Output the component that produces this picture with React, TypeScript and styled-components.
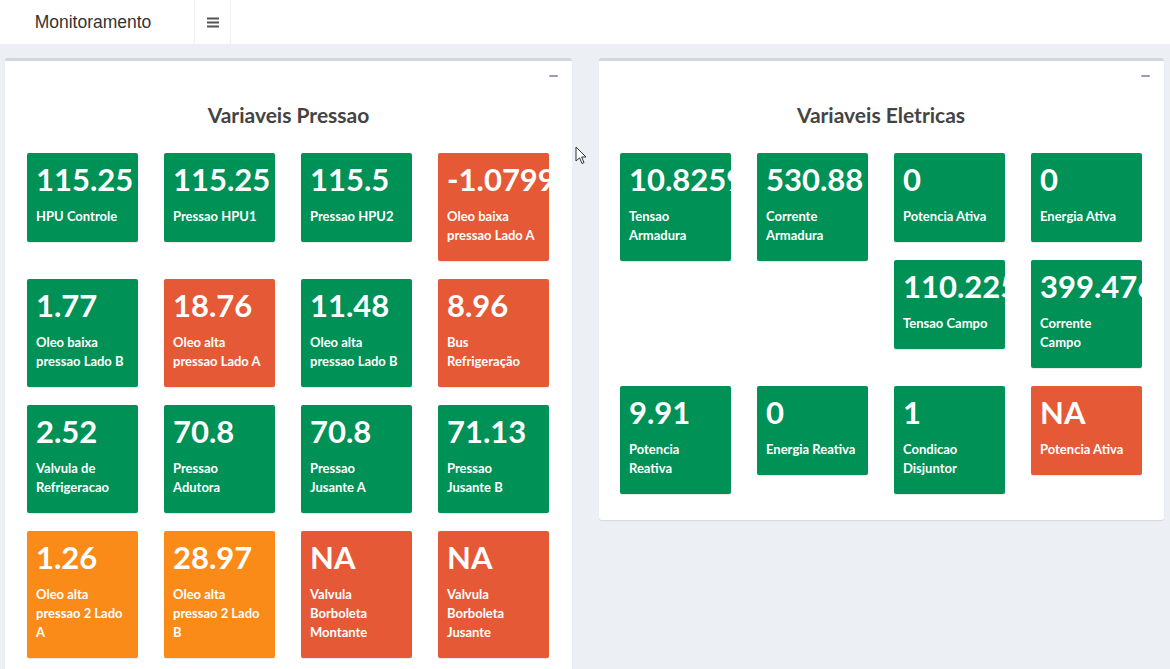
import React from 'react';
import styled, { createGlobalStyle } from 'styled-components';

type Tone = 'green' | 'red' | 'orange';

interface TileData {
  value: string;
  label: string;
  tone: Tone;
}

const toneColors: Record<Tone, string> = {
  green: '#009157',
  red: '#e55937',
  orange: '#fb8b19',
};

const GlobalStyle = createGlobalStyle`
  html, body {
    margin: 0;
    padding: 0;
    background: #ecf0f5;
    font-family: 'Liberation Sans', Arial, sans-serif;
  }
  * { box-sizing: border-box; }
`;

const Page = styled.div`
  position: relative;
  min-height: 669px;
  background: #ecf0f5;
`;

const Header = styled.header`
  display: flex;
  height: 44px;
  background: #ffffff;
`;

const Logo = styled.div`
  width: 194px;
  display: flex;
  align-items: center;
  justify-content: center;
  padding-right: 8px;
  font-size: 17.5px;
  color: #333333;
`;

const Toggle = styled.button`
  width: 37px;
  height: 44px;
  border: none;
  border-left: 1px solid #f0f0f0;
  border-right: 1px solid #f0f0f0;
  background: #ffffff;
  display: flex;
  align-items: center;
  justify-content: center;
  padding: 0;
  margin: 0;
`;

const Content = styled.main`
  display: grid;
  grid-template-columns: 567px 565px;
  column-gap: 27px;
  align-items: start;
  padding: 14px 6px 0 5px;
`;

const Box = styled.section<{ $inset: number }>`
  background: #ffffff;
  border-top: 3px solid #d2d6de;
  border-radius: 3px;
  box-shadow: 0 1px 1px rgba(0, 0, 0, 0.1);
  padding: 0 22px 26px ${props => props.$inset}px;
`;

const BoxTools = styled.div`
  display: flex;
  justify-content: flex-end;
  align-items: center;
  height: 30px;
  margin-right: -8px;
`;

const Minimize = styled.span`
  display: block;
  width: 9px;
  height: 2px;
  border-radius: 1px;
  background: #97a0b3;
`;

const BoxTitle = styled.h2`
  margin: 12px 0 26px;
  text-align: center;
  font-family: Lato, 'Open Sans', sans-serif;
  font-weight: 700;
  font-size: 21px;
  line-height: 24px;
  color: #444444;
`;

const TileGrid = styled.div`
  display: flex;
  flex-direction: column;
  gap: 18px;
`;

const TileRow = styled.div`
  display: flex;
  align-items: flex-start;
  gap: 26px;
`;

const TileStack = styled.div`
  display: flex;
  flex-direction: column;
  gap: 18px;
  width: 111px;
`;

const Tile = styled.div<{ $tone: Tone }>`
  width: 111px;
  flex-shrink: 0;
  overflow: hidden;
  padding: 10px 0 16px 9px;
  border-radius: 2px;
  background: ${props => toneColors[props.$tone]};
  box-shadow: 0 1px 1px rgba(0, 0, 0, 0.1);
  color: #ffffff;
  font-family: Lato, 'Open Sans', sans-serif;
  font-weight: 700;
`;

const Value = styled.div`
  font-size: 31px;
  line-height: 32px;
  white-space: nowrap;
  margin-bottom: 12px;
`;

const Label = styled.div`
  font-size: 13px;
  line-height: 19px;
  white-space: pre;
`;

const Cursor = styled.svg`
  position: absolute;
  left: 575px;
  top: 146px;
`;

const pressao: TileData[][] = [
  [
    { value: '115.25', label: 'HPU Controle', tone: 'green' },
    { value: '115.25', label: 'Pressao HPU1', tone: 'green' },
    { value: '115.5', label: 'Pressao HPU2', tone: 'green' },
    { value: '-1.0799', label: 'Oleo baixa\npressao Lado A', tone: 'red' },
  ],
  [
    { value: '1.77', label: 'Oleo baixa\npressao Lado B', tone: 'green' },
    { value: '18.76', label: 'Oleo alta\npressao Lado A', tone: 'red' },
    { value: '11.48', label: 'Oleo alta\npressao Lado B', tone: 'green' },
    { value: '8.96', label: 'Bus\nRefrigeração', tone: 'red' },
  ],
  [
    { value: '2.52', label: 'Valvula de\nRefrigeracao', tone: 'green' },
    { value: '70.8', label: 'Pressao\nAdutora', tone: 'green' },
    { value: '70.8', label: 'Pressao\nJusante A', tone: 'green' },
    { value: '71.13', label: 'Pressao\nJusante B', tone: 'green' },
  ],
  [
    { value: '1.26', label: 'Oleo alta\npressao 2 Lado\nA', tone: 'orange' },
    { value: '28.97', label: 'Oleo alta\npressao 2 Lado\nB', tone: 'orange' },
    { value: 'NA', label: 'Valvula\nBorboleta\nMontante', tone: 'red' },
    { value: 'NA', label: 'Valvula\nBorboleta\nJusante', tone: 'red' },
  ],
];

// upper part of the electric box: tiles stacked per column
const eletricasColumns: TileData[][] = [
  [{ value: '10.8259', label: 'Tensao\nArmadura', tone: 'green' }],
  [{ value: '530.88', label: 'Corrente\nArmadura', tone: 'green' }],
  [
    { value: '0', label: 'Potencia Ativa', tone: 'green' },
    { value: '110.225', label: 'Tensao Campo', tone: 'green' },
  ],
  [
    { value: '0', label: 'Energia Ativa', tone: 'green' },
    { value: '399.476', label: 'Corrente\nCampo', tone: 'green' },
  ],
];

const eletricasRow: TileData[] = [
  { value: '9.91', label: 'Potencia\nReativa', tone: 'green' },
  { value: '0', label: 'Energia Reativa', tone: 'green' },
  { value: '1', label: 'Condicao\nDisjuntor', tone: 'green' },
  { value: 'NA', label: 'Potencia Ativa', tone: 'red' },
];

const ValueTile: React.FC<{ data: TileData }> = ({ data }) => (
  <Tile $tone={data.tone}>
    <Value>{data.value}</Value>
    <Label>{data.label}</Label>
  </Tile>
);

const MenuIcon = () => (
  <svg width="12" height="11" viewBox="0 0 12 11">
    <rect x="0" y="0.5" width="12" height="2" fill="#555" />
    <rect x="0" y="4.5" width="12" height="2" fill="#555" />
    <rect x="0" y="8.5" width="12" height="2" fill="#555" />
  </svg>
);

const App: React.FC = () => {
  return (
    <Page>
      <GlobalStyle />
      <Header>
        <Logo>Monitoramento</Logo>
        <Toggle aria-label="menu">
          <MenuIcon />
        </Toggle>
      </Header>
      <Content>
        <Box $inset={22}>
          <BoxTools>
            <Minimize />
          </BoxTools>
          <BoxTitle>Variaveis Pressao</BoxTitle>
          <TileGrid>
            {pressao.map((row, i) => (
              <TileRow key={i}>
                {row.map((t, j) => (
                  <ValueTile key={j} data={t} />
                ))}
              </TileRow>
            ))}
          </TileGrid>
        </Box>
        <Box $inset={21}>
          <BoxTools>
            <Minimize />
          </BoxTools>
          <BoxTitle>Variaveis Eletricas</BoxTitle>
          <TileGrid>
            <TileRow>
              {eletricasColumns.map((col, i) => (
                <TileStack key={i}>
                  {col.map((t, j) => (
                    <ValueTile key={j} data={t} />
                  ))}
                </TileStack>
              ))}
            </TileRow>
            <TileRow>
              {eletricasRow.map((t, j) => (
                <ValueTile key={j} data={t} />
              ))}
            </TileRow>
          </TileGrid>
        </Box>
      </Content>
      <Cursor width="12" height="19" viewBox="0 0 12 19">
        <path d="M1 1 L1 15 L4.5 11.8 L7 17.5 L9 16.6 L6.6 11 L11 11 Z" fill="#fff" stroke="#333" strokeWidth="1" strokeLinejoin="round" />
      </Cursor>
    </Page>
  );
};

export default App;
